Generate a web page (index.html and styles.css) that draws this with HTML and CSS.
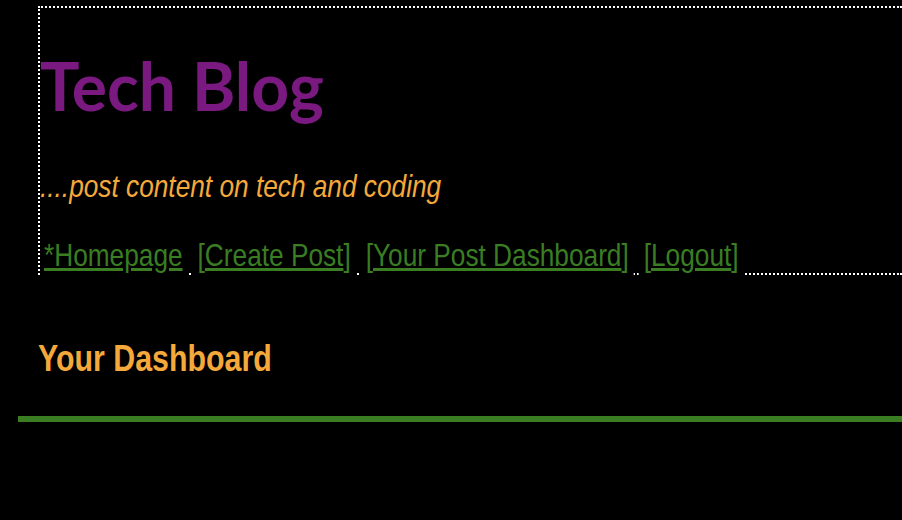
FILE: index.html
```html
<!DOCTYPE html>
<html lang="en">
<head>
<meta charset="utf-8">
<title>Tech Blog</title>
<link rel="stylesheet" href="styles.css">
</head>
<body>
<div class="page">
  <header class="site-header">
    <h1 class="site-title">Tech Blog</h1>
    <p class="tagline"><span class="narrow">....post content on tech and coding</span></p>
    <nav class="nav">
      <div class="nav-track">
        <span class="nav-item"><a href="#">*Homepage</a></span>
        <span class="nav-item">[<a href="#">Create Post</a>]</span>
        <span class="nav-item">[<a href="#">Your Post Dashboard</a>]</span>
        <span class="nav-item">[<a href="#">Logout</a>]</span>
      </div>
    </nav>
  </header>
  <main class="content">
    <h2 class="section-title"><span class="narrow">Your Dashboard</span></h2>
  </main>
  <hr class="rule">
</div>
</body>
</html>
```
FILE: styles.css
```css
html, body {
  margin: 0;
  padding: 0;
  background: #000;
}

body {
  font-family: "Liberation Sans", Arial, sans-serif;
}

/* Arial Narrow is Arial compressed horizontally to 82% */
.narrow {
  display: inline-block;
  transform: scaleX(0.82);
  transform-origin: left center;
  white-space: nowrap;
}

.page {
  padding-left: 18px;
}

.site-header {
  margin: 6px 0 0 20px;
  border-top: 2px dotted #fff;
  border-left: 2px dotted #fff;
  border-bottom: 2px dotted #fff;
}

.site-title {
  margin: 0;
  padding-top: 38px;
  font-family: "Lato", sans-serif;
  font-weight: 700;
  font-size: 66px;
  line-height: 80px;
  color: #7a1a80;
}

.tagline {
  margin: 40px 0 0;
  font-style: italic;
  font-size: 32px;
  line-height: 40px;
  color: #f5a93b;
}

.nav {
  margin: 33px 0 -2px;
}

.nav-track {
  display: flex;
  gap: calc(4.5px / 0.82);
  width: calc(100% / 0.82);
  transform: scaleX(0.82);
  transform-origin: left top;
}

.nav-item {
  background: #000;
  padding: 0 calc(5px / 0.82) 4px calc(5.5px / 0.82);
  font-size: 32px;
  line-height: 32px;
  color: #3a7d22;
  white-space: nowrap;
}

.nav-item:first-child {
  padding-left: calc(4px / 0.82);
}

.nav-item a {
  color: #3a7d22;
  text-decoration: underline;
}

.content {
  padding: 62px 0 0 20px;
}

.section-title {
  margin: 0;
  font-weight: 700;
  font-size: 37px;
  line-height: 44px;
  color: #f5a93b;
}

.rule {
  margin: 35px 0 0;
  border: 0;
  height: 6px;
  background: #3a7d22;
}
```
